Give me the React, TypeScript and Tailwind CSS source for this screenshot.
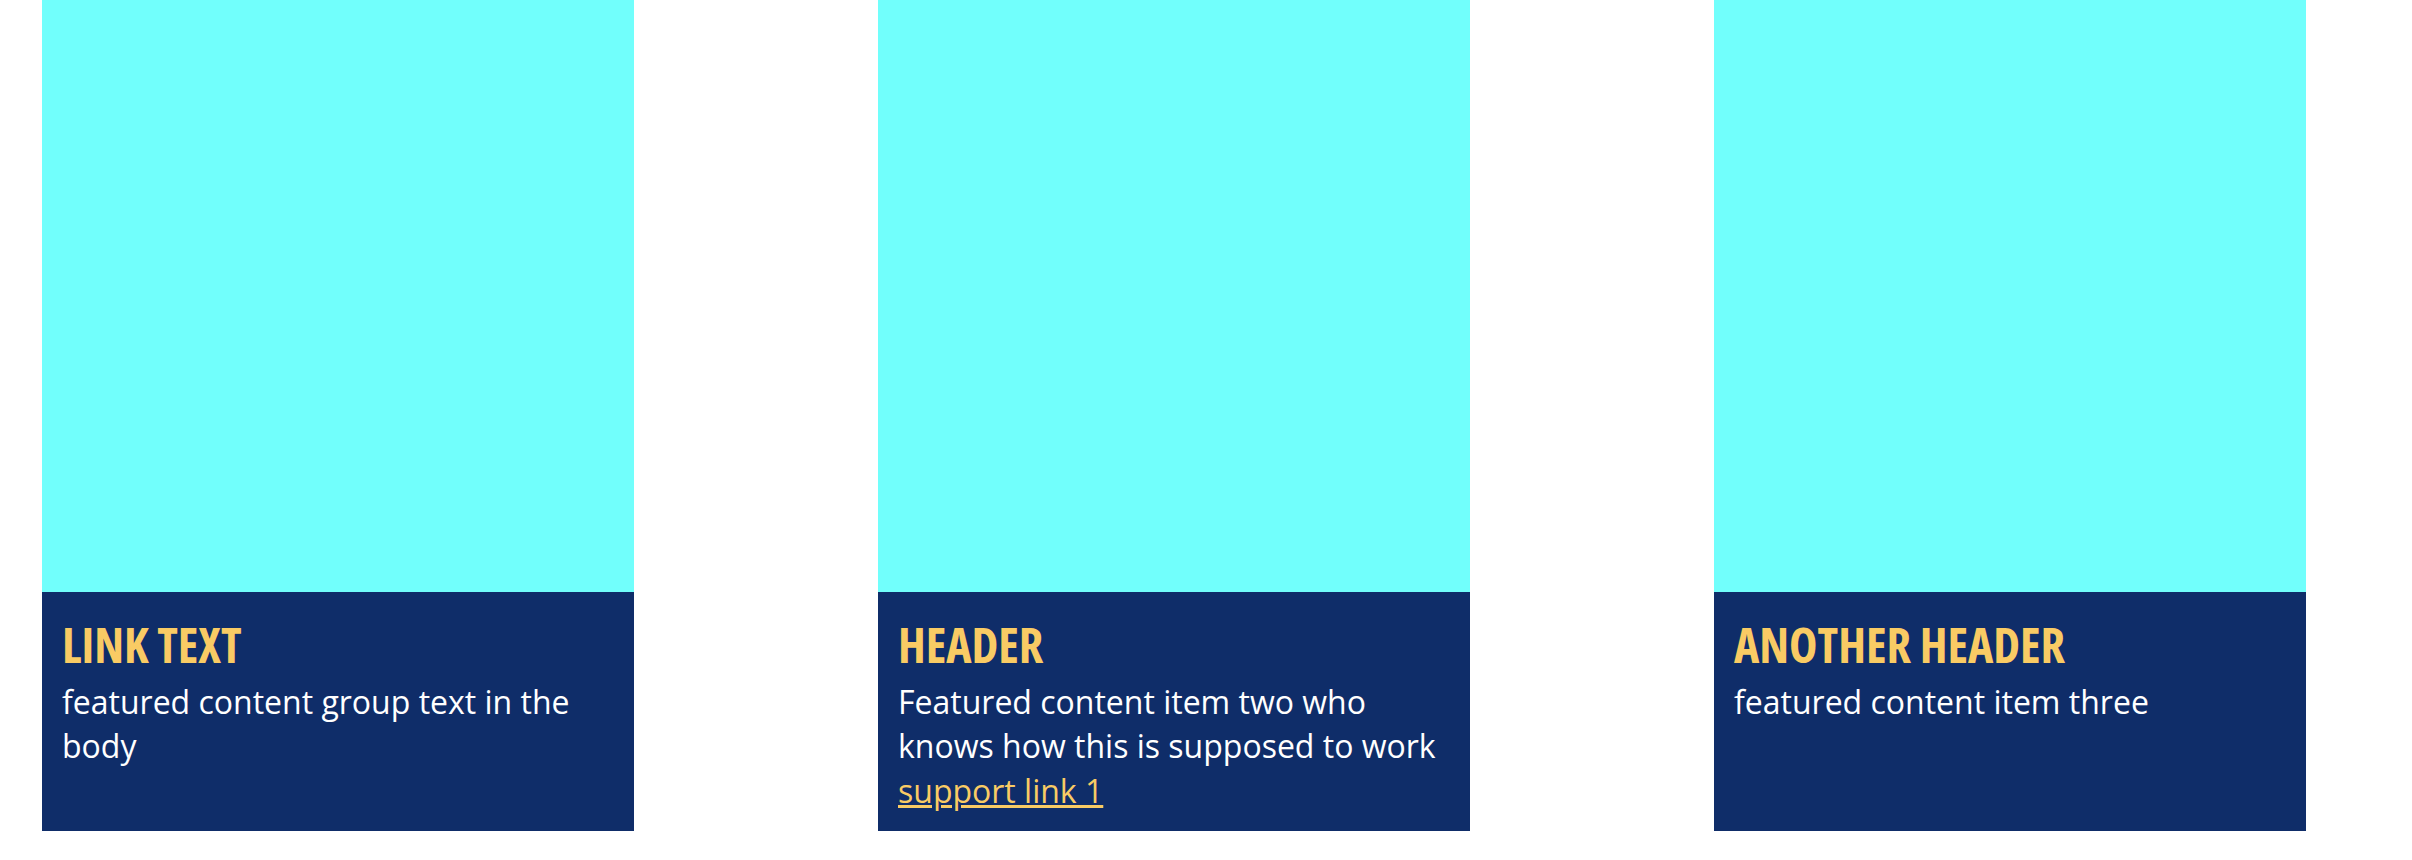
import React from 'react';

interface Feature {
  title: string;
  body: string;
  link?: string;
}

const features: Feature[] = [
  { title: 'LINK TEXT', body: 'featured content group text in the body' },
  { title: 'HEADER', body: 'Featured content item two who knows how this is supposed to work', link: 'support link 1' },
  { title: 'ANOTHER HEADER', body: 'featured content item three' },
];

const FeatureCard: React.FC<{ item: Feature }> = ({ item }) => (
  <div className="w-[592px] flex flex-col">
    <div className="h-[592px] bg-[#71fffc]" />
    <div className="h-[239px] bg-[#0f2d69] px-[20px] pt-[24px]">
      <h3 className="font-['Open_Sans','Liberation_Sans_Narrow',sans-serif] [font-stretch:75%] font-bold text-[48px] leading-[57.6px] text-[#f9cb64]">
        {item.title}
      </h3>
      <p className="mt-[6px] font-['Open_Sans',sans-serif] text-[32px] leading-[44.5px] text-white">
        {item.body}
        {item.link && (
          <>
            <br />
            <a href="#" className="text-[#f9cb64] underline">{item.link}</a>
          </>
        )}
      </p>
    </div>
  </div>
);

export default function App() {
  return (
    <div className="min-h-[860px] bg-white pl-[42px] flex gap-[244px]">
      {features.map(f => (
        <FeatureCard key={f.title} item={f} />
      ))}
    </div>
  );
}
